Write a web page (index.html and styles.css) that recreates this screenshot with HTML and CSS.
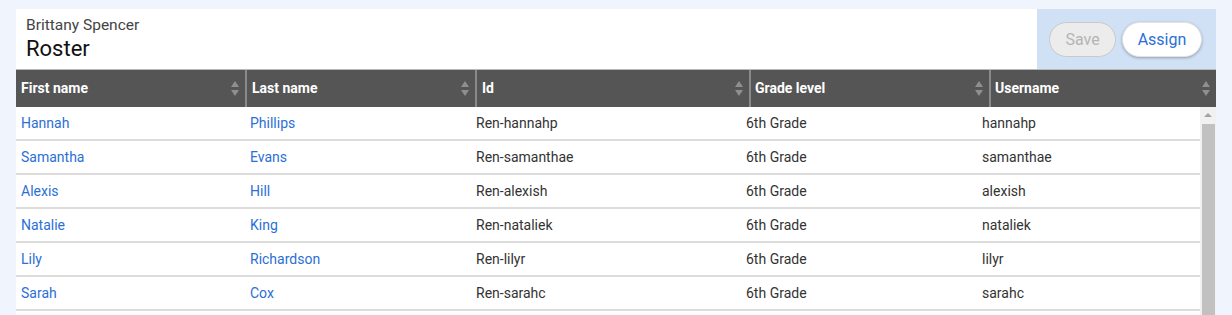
FILE: index.html
```html
<!DOCTYPE html>
<html>
<head>
<meta charset="utf-8">
<link rel="stylesheet" href="styles.css">
</head>
<body>
<div class="card">
  <div class="top">
    <div class="titles">
      <div class="owner">Brittany Spencer</div>
      <div class="title">Roster</div>
    </div>
    <div class="actions">
      <button class="btn btn-save">Save</button>
      <button class="btn btn-assign">Assign</button>
    </div>
  </div>
  <div class="thead">
    <div class="th c1"><span>First name</span><i class="sort"></i></div>
    <div class="th c2"><span>Last name</span><i class="sort"></i></div>
    <div class="th c3"><span>Id</span><i class="sort"></i></div>
    <div class="th c4"><span>Grade level</span><i class="sort"></i></div>
    <div class="th c5"><span>Username</span><i class="sort"></i></div>
  </div>
  <div class="tbody">
    <div class="rows">
      <div class="tr"><div class="td b1 link">Hannah</div><div class="td b2 link">Phillips</div><div class="td b3">Ren-hannahp</div><div class="td b4">6th Grade</div><div class="td b5">hannahp</div></div>
      <div class="tr"><div class="td b1 link">Samantha</div><div class="td b2 link">Evans</div><div class="td b3">Ren-samanthae</div><div class="td b4">6th Grade</div><div class="td b5">samanthae</div></div>
      <div class="tr"><div class="td b1 link">Alexis</div><div class="td b2 link">Hill</div><div class="td b3">Ren-alexish</div><div class="td b4">6th Grade</div><div class="td b5">alexish</div></div>
      <div class="tr"><div class="td b1 link">Natalie</div><div class="td b2 link">King</div><div class="td b3">Ren-nataliek</div><div class="td b4">6th Grade</div><div class="td b5">nataliek</div></div>
      <div class="tr"><div class="td b1 link">Lily</div><div class="td b2 link">Richardson</div><div class="td b3">Ren-lilyr</div><div class="td b4">6th Grade</div><div class="td b5">lilyr</div></div>
      <div class="tr"><div class="td b1 link">Sarah</div><div class="td b2 link">Cox</div><div class="td b3">Ren-sarahc</div><div class="td b4">6th Grade</div><div class="td b5">sarahc</div></div>
    </div>
    <div class="scrollbar">
      <div class="sb-up"></div>
      <div class="sb-thumb"></div>
    </div>
  </div>
</div>
</body>
</html>
```
FILE: styles.css
```css
html, body {
  margin: 0;
  padding: 0;
}
body {
  background: #f0f4fc;
  font-family: Roboto, "Liberation Sans", sans-serif;
  height: 315px;
  overflow: hidden;
}
.card {
  margin: 9px 16px 0 16px;
  background: #fff;
  width: 1200px;
}
.top {
  display: flex;
  height: 60px;
}
.titles {
  flex: 1;
  padding: 7px 0 0 10px;
}
.owner {
  font-size: 15.5px;
  color: #444;
  line-height: 18px;
}
.title {
  font-size: 22px;
  color: #111;
  line-height: 28px;
  margin-top: 1px;
}
.actions {
  width: 179px;
  background: #d0e1f6;
  display: flex;
  align-items: center;
  justify-content: flex-end;
  gap: 6px;
  padding-right: 14px;
  box-sizing: border-box;
}
.btn {
  height: 35px;
  border-radius: 18px;
  font-family: Roboto, "Liberation Sans", sans-serif;
  font-size: 16px;
  padding: 0;
  margin-top: 1px;
}
.btn-save {
  width: 67px;
  background: #ececec;
  border: 1px solid #c9c9c9;
  color: #b4b4b4;
}
.btn-assign {
  width: 80px;
  background: #fff;
  border: 1px solid #e2e2e2;
  color: #2b6fd6;
  box-shadow: 0 1px 3px rgba(0,0,0,0.3);
}
.thead {
  display: flex;
  height: 38px;
  background: #555;
  border-top: 1px solid #b8b8b8;
  box-sizing: border-box;
}
.th {
  display: flex;
  align-items: center;
  justify-content: space-between;
  padding: 0 6px 2px 5px;
  box-sizing: border-box;
  color: #fff;
  font-weight: bold;
  font-size: 14px;
  border-right: 2px solid #8a8a8a;
}
.th:last-child {
  border-right: none;
}
.th .sort {
  margin-top: 2px;
}
.c1 { width: 231px; }
.c2 { width: 230px; padding-left: 5px; }
.c3 { width: 274px; padding-left: 5px; }
.c4 { width: 240px; padding-left: 4px; }
.c5 { width: 225px; padding-left: 4px; }
.sort {
  position: relative;
  width: 8px;
  height: 17px;
  display: block;
}
.sort::before, .sort::after {
  content: "";
  position: absolute;
  left: 0;
  border-left: 4px solid transparent;
  border-right: 4px solid transparent;
}
.sort::before {
  top: 1px;
  border-bottom: 6px solid #8f8f8f;
}
.sort::after {
  bottom: 1px;
  border-top: 6px solid #8f8f8f;
}
.tbody {
  display: flex;
  height: 208px;
}
.rows {
  width: 1184px;
}
.tr {
  display: flex;
  height: 34px;
  border-bottom: 2px solid #dcdcdc;
  box-sizing: border-box;
  align-items: center;
}
.td {
  font-size: 14px;
  color: #333;
  padding-left: 5px;
  box-sizing: border-box;
}
.link { color: #2b6fd6; }
.b1 { width: 229px; }
.b2 { width: 226px; padding-left: 5px; }
.b3 { width: 270px; }
.b4 { width: 236px; }
.b5 { width: 223px; }
.scrollbar {
  width: 16px;
  background: #f1f1f1;
  display: flex;
  flex-direction: column;
  align-items: center;
}
.sb-up {
  height: 17px;
  width: 16px;
  position: relative;
}
.sb-up::before {
  content: "";
  position: absolute;
  left: 4px;
  top: 6px;
  border-left: 4px solid transparent;
  border-right: 4px solid transparent;
  border-bottom: 4px solid #a3a3a3;
}
.sb-thumb {
  width: 13px;
  flex: 1;
  background: #c1c1c1;
}
```
